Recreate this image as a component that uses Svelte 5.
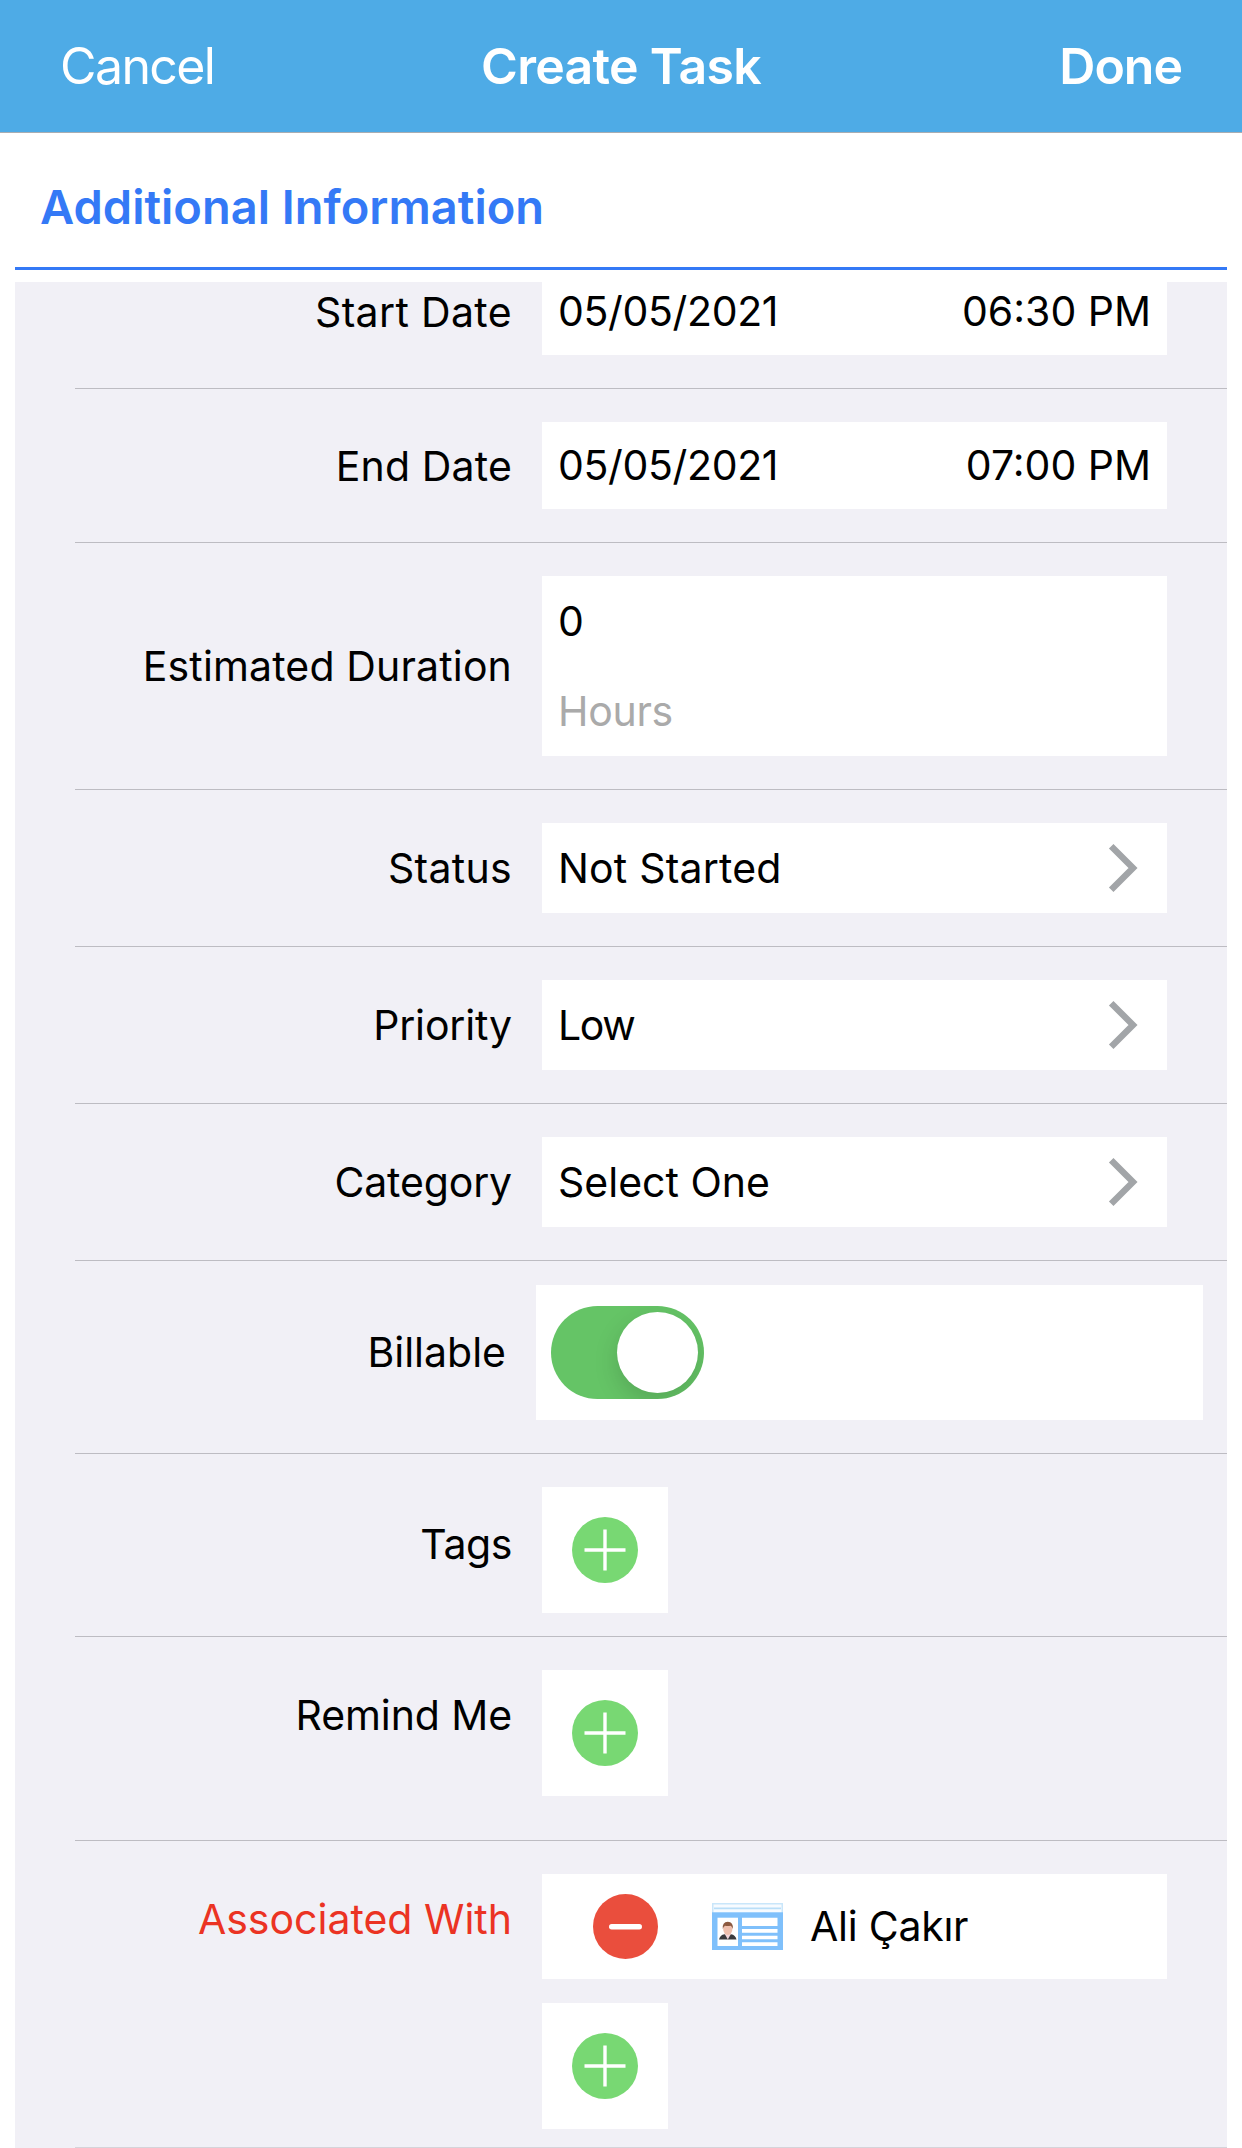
<script lang="ts">
  type Row = {
    name: string;
    label: string;
    kind: "date" | "duration" | "select" | "switch" | "add" | "linked";
    value?: string;
    extra?: string;
    required?: boolean;
  };

  const rows: Row[] = [
    { name: "start", label: "Start Date", kind: "date", value: "05/05/2021", extra: "06:30 PM" },
    { name: "end", label: "End Date", kind: "date", value: "05/05/2021", extra: "07:00 PM" },
    { name: "duration", label: "Estimated Duration", kind: "duration", value: "0", extra: "Hours" },
    { name: "status", label: "Status", kind: "select", value: "Not Started" },
    { name: "priority", label: "Priority", kind: "select", value: "Low" },
    { name: "category", label: "Category", kind: "select", value: "Select One" },
    { name: "billable", label: "Billable", kind: "switch" },
    { name: "tags", label: "Tags", kind: "add" },
    { name: "remind", label: "Remind Me", kind: "add" },
    { name: "associated", label: "Associated With", kind: "linked", value: "Ali Çakır", required: true },
  ];

  let billable = $state(true);
</script>

{#snippet addButton()}
  <button class="add" aria-label="Add">
    <svg width="66" height="66" viewBox="0 0 66 66">
      <circle cx="33" cy="33" r="33" fill="#78d873" />
      <path d="M33 12.5v41M12.5 33h41" stroke="#fff" stroke-width="3.4" />
    </svg>
  </button>
{/snippet}

<div class="screen">
  <header class="navbar">
    <button class="nav-button cancel">Cancel</button>
    <h1>Create Task</h1>
    <button class="nav-button done">Done</button>
  </header>

  <h2>Additional Information</h2>

  <main class="form">
    {#each rows as row}
      <div class="row {row.name}">
        <div class="label" class:required={row.required}>{row.label}</div>

        {#if row.kind === "date"}
          <div class="field date">
            <span class="day">{row.value}</span>
            <span>{row.extra}</span>
          </div>
        {:else if row.kind === "duration"}
          <div class="field duration-field">
            <span>{row.value}</span>
            <span class="placeholder">{row.extra}</span>
          </div>
        {:else if row.kind === "select"}
          <div class="field select">
            <span>{row.value}</span>
            <svg width="30" height="50" viewBox="0 0 30 50">
              <path d="M3.2 3.2L25 25L3.2 46.8" fill="none" stroke="#a2a5a8" stroke-width="6.4" />
            </svg>
          </div>
        {:else if row.kind === "switch"}
          <div class="field switch-field">
            <button
              class="switch"
              class:on={billable}
              aria-label={row.label}
              onclick={() => (billable = !billable)}
            >
              <span class="knob"></span>
            </button>
          </div>
        {:else if row.kind === "add"}
          {@render addButton()}
        {:else}
          <div class="stack">
            <div class="field linked">
              <svg width="65" height="65" viewBox="0 0 65 65">
                <circle cx="32.5" cy="32.5" r="32.5" fill="#ea4e3d" />
                <rect x="16" y="30" width="33" height="5.4" rx="2.7" fill="#fff" />
              </svg>
              <svg class="card" width="71" height="47" viewBox="0 0 71 47">
                <rect x="0.7" y="0.7" width="69.6" height="10" fill="#f7fbff" stroke="#c9e6fa" stroke-width="1.6" />
                <path d="M2 5.3h67" stroke="#b9def8" stroke-width="1.8" />
                <rect y="9.3" width="71" height="37.7" fill="#7fc0fb" />
                <rect x="5.5" y="14.7" width="20.5" height="28.3" fill="#fff" />
                <path d="M7 36.5q1-4.5 5.5-5.2h6.500q4.500 .7 5.500 5.200z" fill="#3a3a3d" />
                <path d="M12.500 30.500l3.300 6L19.200 30.500z" fill="#f3d5da" />
                <ellipse cx="15.800" cy="26" rx="4.600" ry="6" fill="#efc0ae" />
                <path d="M10.800 26q-.8-7 5-7.200q5.800 .2 5 7.200q-1-3-2.200-3.300q-3 .8-5.600 0q-1.400 .8-2.200 3.300z" fill="#8c5a40" />
                <path
                  d="M30 14.700h35.500v8.300H30zM30 26h35.500v3.700H30zM30 32.700h35.500v3.600H30zM30 39.300h35.500v3.700H30z"
                  fill="#fff"
                />
              </svg>
              <span>{row.value}</span>
            </div>
            {@render addButton()}
          </div>
        {/if}
      </div>
    {/each}
  </main>
</div>

<style>
  :global(body) {
    margin: 0;
    background: #fff;
  }
  .screen {
    width: 1242px;
    height: 2148px;
    overflow: hidden;
    background: #fff;
    color: #000;
    font-family: Inter, "Noto Sans", sans-serif;
    font-size: 41px;
    line-height: 50px;
    white-space: nowrap;
  }
  button {
    padding: 0;
    border: none;
    font: inherit;
    cursor: pointer;
  }
  svg {
    display: block;
    flex: none;
  }
  .navbar {
    box-sizing: border-box;
    height: 133px;
    padding: 0 60px;
    display: grid;
    grid-template-columns: 1fr auto 1fr;
    align-items: center;
    background: #4eabe6;
    border-bottom: 1px solid #a9adb2;
    color: #fff;
  }
  .navbar h1,
  .nav-button {
    margin: 0;
    background: none;
    color: #fff;
    font-size: 50px;
    line-height: 60px;
  }
  .navbar h1,
  .done {
    font-weight: 600;
  }
  .navbar h1 {
    letter-spacing: -0.7px;
  }
  .cancel {
    text-align: left;
    font-weight: 400;
    letter-spacing: -1.6px;
  }
  .done {
    text-align: right;
    letter-spacing: -1px;
  }
  h2 {
    box-sizing: border-box;
    height: 137px;
    margin: 0 15px 12px;
    padding: 45px 0 0 25px;
    border-bottom: 3px solid #3479f6;
    color: #3479f6;
    font-size: 47px;
    line-height: 58px;
    font-weight: 600;
  }
  .form {
    margin: 0 15px;
    background: #f1f0f6;
  }
  .row {
    display: flex;
    align-items: flex-start;
    gap: 30px;
    box-sizing: border-box;
    margin-left: 60px;
    padding-top: 33px;
    border-bottom: 1px solid #bdbcc2;
  }
  .label {
    width: 437px;
    text-align: right;
  }
  .required {
    color: #eb3323;
  }
  .field {
    box-sizing: border-box;
    width: 625px;
    padding: 0 16px;
    display: flex;
    align-items: center;
    justify-content: space-between;
    background: #fff;
  }
  .date {
    height: 87px;
    padding-bottom: 2px;
  }
  .day {
    letter-spacing: -0.35px;
  }
  /* first row is scrolled partly under the section title */
  .start {
    height: 107px;
    padding-top: 0;
  }
  .start .date {
    height: 73px;
    padding-bottom: 16px;
  }
  .start .label {
    padding-top: 5px;
    letter-spacing: 0.35px;
  }
  .end {
    height: 154px;
  }
  .end .label {
    padding-top: 19px;
    letter-spacing: 0.15px;
  }
  .duration {
    height: 247px;
  }
  .duration .label {
    padding-top: 65px;
    letter-spacing: 0.15px;
  }
  .duration-field {
    height: 180px;
    flex-direction: column;
    align-items: flex-start;
    justify-content: center;
    gap: 40px;
  }
  .placeholder {
    color: #aaa;
    letter-spacing: -0.3px;
  }
  .status,
  .priority,
  .category {
    height: 157px;
  }
  .status .label,
  .priority .label,
  .category .label {
    padding-top: 20px;
    letter-spacing: -0.15px;
  }
  .status .label {
    letter-spacing: 0.3px;
  }
  .select {
    height: 90px;
    padding-right: 29px;
  }
  .status .select {
    letter-spacing: 0.2px;
  }
  .priority .select {
    letter-spacing: -1.4px;
  }
  .billable {
    height: 193px;
    padding-top: 24px;
  }
  .billable .label {
    width: 431px;
    padding-top: 42px;
  }
  .switch-field {
    width: 667px;
    height: 135px;
    padding: 0 15px;
  }
  .switch {
    width: 153px;
    height: 93px;
    padding: 6px;
    display: flex;
    border-radius: 47px;
    overflow: hidden;
    background: #e9e9ea;
  }
  .switch.on {
    justify-content: flex-end;
    background: #65c466;
  }
  .knob {
    width: 81px;
    height: 81px;
    border-radius: 50%;
    background: #fff;
    box-shadow: 0 9px 24px rgba(0, 0, 0, 0.15);
  }
  .add {
    width: 126px;
    height: 126px;
    display: grid;
    place-items: center;
    background: #fff;
  }
  .tags {
    height: 183px;
  }
  .tags .label {
    padding-top: 32px;
    letter-spacing: -0.4px;
  }
  .remind {
    height: 204px;
  }
  .remind .label {
    padding-top: 20px;
    letter-spacing: -0.1px;
  }
  .associated {
    height: 307px;
    border-bottom-color: #d5d4da;
  }
  .associated .label {
    padding-top: 20px;
  }
  .stack {
    display: flex;
    flex-direction: column;
    gap: 24px;
  }
  .linked {
    height: 105px;
    padding: 0 0 0 51px;
    justify-content: flex-start;
  }
  .linked span {
    padding-bottom: 2px;
    letter-spacing: -0.25px;
  }
  .card {
    margin: 0 27px 0 54px;
  }
</style>
